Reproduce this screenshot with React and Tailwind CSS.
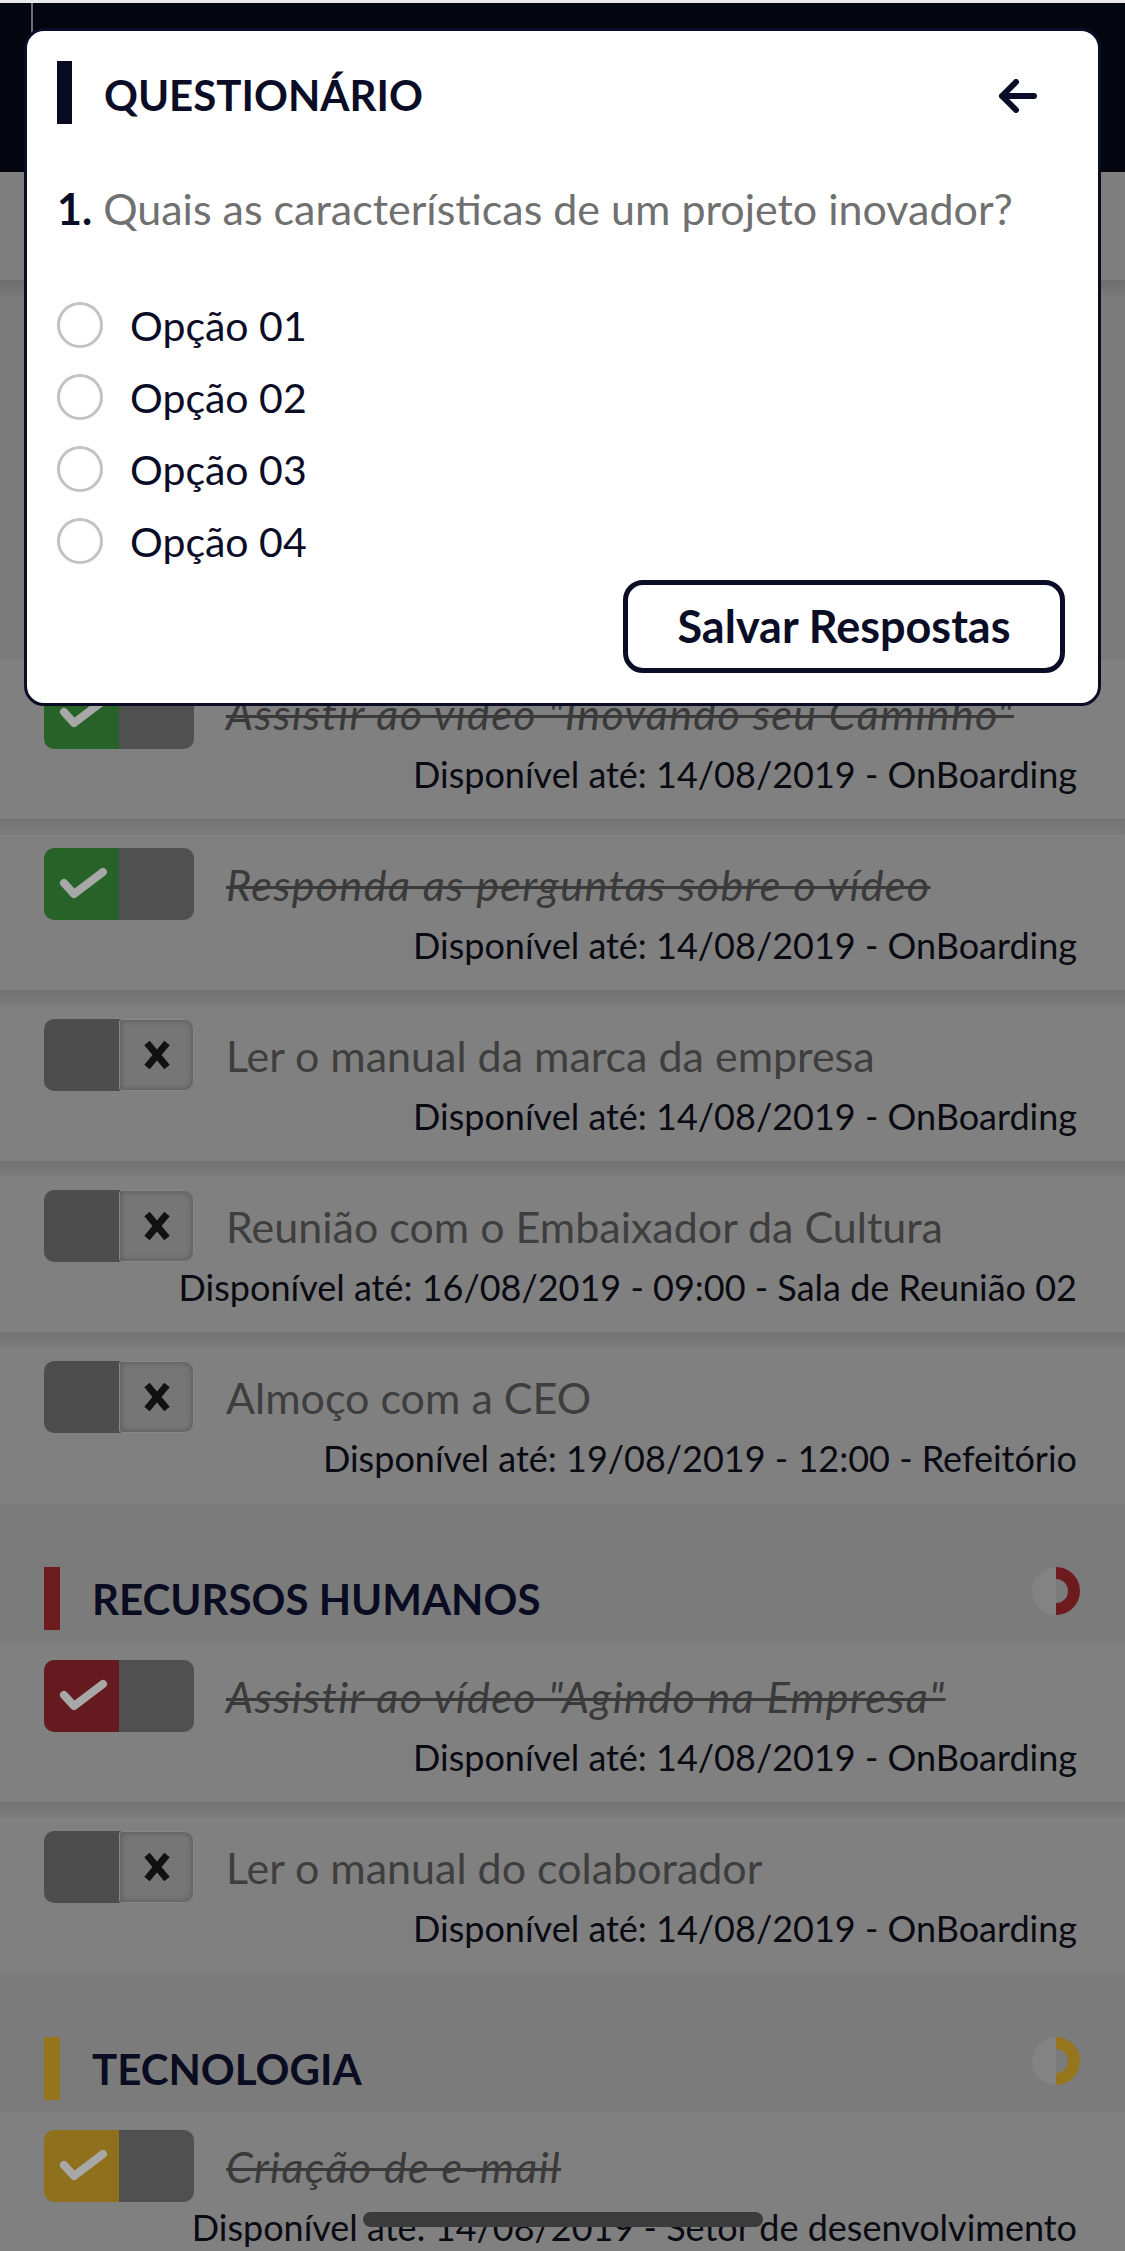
import React from "react";

function CheckIcon() {
  return (
    <svg width="75" height="72" viewBox="0 0 75 72">
      <path d="M20 35 L30 46 L59 24" stroke="#a8a8a8" strokeWidth="8" fill="none" strokeLinecap="round" strokeLinejoin="round" />
    </svg>
  );
}

function XIcon() {
  return (
    <svg width="28" height="30" viewBox="0 0 28 30">
      <path d="M4 3 L24 27 M24 3 L4 27" stroke="#111111" strokeWidth="7" fill="none" strokeLinecap="butt" />
    </svg>
  );
}

function Toggle({ done, onClass }) {
  if (done) {
    return (
      <div className="flex h-[72px] w-[150px] shrink-0 overflow-hidden rounded-[10px]">
        <div className={"flex w-[75px] items-center justify-center " + onClass}>
          <CheckIcon />
        </div>
        <div className="w-[75px] bg-[#505050]" />
      </div>
    );
  }
  return (
    <div className="flex h-[72px] w-[150px] shrink-0 rounded-[10px] bg-[#4d4d4d]">
      <div className="w-[75px]" />
      <div className="flex w-[75px] items-center justify-center rounded-r-[10px] rounded-l-[3px] border border-[#888888] bg-[#767676] shadow-[inset_0_0_6px_rgba(0,0,0,0.3)]">
        <XIcon />
      </div>
    </div>
  );
}

function Item({ first, done, onClass, title, info }) {
  return (
    <div className="bg-[#808080]">
      {!first && <div className="h-[16px] bg-gradient-to-b from-[#737373] to-[#7c7c7c]" />}
      <div className={(first ? "pt-[17px]" : "pt-[13px]") + " pb-[25px] pl-[44px] pr-[48px]"}>
        <div className="flex h-[72px] items-center">
          <Toggle done={done} onClass={onClass} />
          <div
            className={
              "ml-[32px] whitespace-nowrap text-[43px] leading-none " +
              (done ? "italic tracking-[1.4px] line-through decoration-[3px] text-[#3a3a3a]" : "text-[#3e3e3e]")
            }
          >
            {title}
          </div>
        </div>
        <div className="mt-[5px] whitespace-nowrap text-right text-[36px] leading-[40px] text-[#0a0a12]">{info}</div>
      </div>
    </div>
  );
}

function Donut({ color }) {
  return (
    <svg width="48" height="48" viewBox="0 0 48 48">
      <path d="M24 0 A24 24 0 0 0 24 48 Z" fill="#838383" />
      <path d="M24 6 A18 18 0 0 1 24 42" stroke={color} strokeWidth="12" fill="none" />
    </svg>
  );
}

function SectionHeader({ title, barClass, color }) {
  return (
    <div className="flex h-[140px] items-start bg-[#7b7b7b] pl-[44px] pr-[45px] pt-[64px]">
      <div className={"h-[63px] w-[16px] " + barClass} />
      <div className="ml-[32px] mt-[12px] text-[42px] font-bold leading-[40px] text-[#0a0c22]">{title}</div>
      <div className="ml-auto">
        <Donut color={color} />
      </div>
    </div>
  );
}

const D14 = "Disponível até: 14/08/2019 - OnBoarding";

export default function App() {
  return (
    <div className="relative h-[2251px] w-[1125px] overflow-hidden bg-[#808080] font-['Lato',sans-serif]">
      {/* background page (dimmed) */}
      <div className="h-[3px] bg-[#e9e9e9]" />
      <div className="relative h-[169px] bg-[#03050f]">
        <div className="absolute left-[31px] top-0 h-[30px] w-[2px] bg-[#6f6f6f]" />
      </div>
      <div className="h-[108px] bg-[#7f7f7f]" />
      <div className="h-[15px] bg-gradient-to-b from-[#6d6d6d] to-[#787878]" />
      <div className="h-[365px] bg-[#7b7b7b]" />

      <Item first done onClass="bg-[#276229]" title={'Assistir ao vídeo "Inovando seu Caminho"'} info={D14} />
      <Item done onClass="bg-[#276229]" title="Responda as perguntas sobre o vídeo" info={D14} />
      <Item title="Ler o manual da marca da empresa" info={D14} />
      <Item title="Reunião com o Embaixador da Cultura" info="Disponível até: 16/08/2019 - 09:00 - Sala de Reunião 02" />
      <Item title="Almoço com a CEO" info="Disponível até: 19/08/2019 - 12:00 - Refeitório" />

      <SectionHeader title="RECURSOS HUMANOS" barClass="bg-[#6c1b1f]" color="#6e1b20" />
      <Item first done onClass="bg-[#641a1e]" title={'Assistir ao vídeo "Agindo na Empresa"'} info={D14} />
      <Item title="Ler o manual do colaborador" info={D14} />

      <SectionHeader title="TECNOLOGIA" barClass="bg-[#94751d]" color="#96761d" />
      <Item first done onClass="bg-[#8f701c]" title="Criação de e-mail" info="Disponível até: 14/08/2019 - Setor de desenvolvimento" />

      {/* modal */}
      <div className="absolute left-[24px] top-[28px] flex w-[1077px] flex-col rounded-[20px] border-[3px] border-[#0b0d26] bg-white px-[30px] pb-[30px] pt-[30px]">
        <div className="flex h-[63px] items-center">
          <div className="h-[63px] w-[15px] bg-[#080a22]" />
          <div className="ml-[32px] mt-[4px] text-[42px] font-bold leading-none text-[#0b0d26]">QUESTIONÁRIO</div>
          <svg className="ml-auto mr-[31px] mt-[6px]" width="40" height="34" viewBox="0 0 40 34">
            <path d="M37 17 H5 M19 3 L5 17 L19 31" stroke="#0b0d26" strokeWidth="6" fill="none" strokeLinecap="round" strokeLinejoin="round" />
          </svg>
        </div>
        <div className="mt-[62px] whitespace-nowrap text-[43px] leading-[46px]">
          <span className="font-bold text-[#0b0d26]">1.</span>
          <span className="text-[#707070]"> Quais as características de um projeto inovador?</span>
        </div>
        <div className="mt-[57px] flex flex-col">
          {["Opção 01", "Opção 02", "Opção 03", "Opção 04"].map((o) => (
            <div key={o} className="flex h-[72px] items-center">
              <div className="h-[46px] w-[46px] shrink-0 rounded-full border-[3px] border-[#c2c2c2]" />
              <span className="ml-[27px] text-[41px] leading-none text-[#0b0d26]">{o}</span>
            </div>
          ))}
        </div>
        <button className="mr-[3px] mt-[3px] h-[93px] w-[442px] self-end rounded-[20px] border-[5px] border-[#0b0d26] bg-white text-[45px] font-bold leading-none text-[#0b0d26]">
          Salvar Respostas
        </button>
      </div>

      {/* home indicator */}
      <div className="absolute left-[363px] top-[2212px] h-[15px] w-[400px] rounded-full bg-[#3b3b3b]" />
    </div>
  );
}
